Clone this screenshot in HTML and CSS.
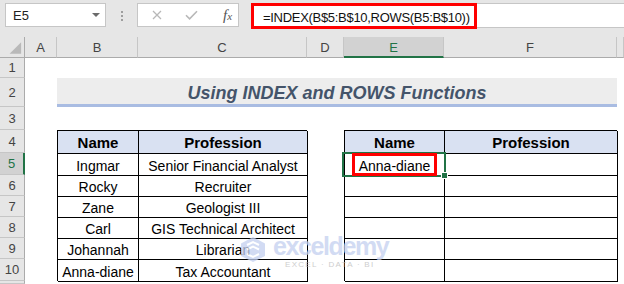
FILE: index.html
```html
<!DOCTYPE html>
<html lang="en">
<head>
<meta charset="UTF-8">
<meta name="viewport" content="width=device-width, initial-scale=1.0">
<title>Using INDEX and ROWS Functions</title>
<link rel="stylesheet" href="styles.css">
</head>
<body>
<div class="formula-row">
    <div class="name-box"><span>E5</span><span class="caret"></span></div>
    <div class="grip"><i></i><i></i><i></i></div>
    <div class="fx-buttons">
        <svg class="btn-cancel" width="10" height="10" viewBox="0 0 10 10"><path d="M1 1L9 9M9 1L1 9" stroke="#b8b8b8" stroke-width="1.3"/></svg>
        <svg class="btn-enter" width="13" height="10" viewBox="0 0 13 10"><path d="M1 5.2L4.6 8.8L12 1.2" fill="none" stroke="#b8b8b8" stroke-width="1.6"/></svg>
        <span class="fx">f<small>x</small></span>
    </div>
    <div class="formula-input"><span class="formula-text">=INDEX(B$5:B$10,ROWS(B5:B$10))</span></div>
</div>

<div class="sheet">
    <div class="col-head corner"><svg width="25" height="20" viewBox="0 0 25 20"><polygon points="22,5 22,17 10,17" fill="#b9b9b9"/></svg></div>
    <div class="col-head">A</div>
    <div class="col-head">B</div>
    <div class="col-head">C</div>
    <div class="col-head">D</div>
    <div class="col-head active">E</div>
    <div class="col-head">F</div>
    <div class="col-head"></div>

    <div class="row-head">1</div>
    <div class="row-head">2</div>
    <div class="row-head">3</div>
    <div class="row-head">4</div>
    <div class="row-head active">5</div>
    <div class="row-head">6</div>
    <div class="row-head">7</div>
    <div class="row-head">8</div>
    <div class="row-head">9</div>
    <div class="row-head">10</div>
    <div class="row-head"></div>

    <div class="title-band">Using INDEX and ROWS Functions</div>

    <div class="data-table table-left">
        <div class="cell head">Name</div><div class="cell head">Profession</div>
        <div class="cell">Ingmar</div><div class="cell">Senior Financial Analyst</div>
        <div class="cell">Rocky</div><div class="cell">Recruiter</div>
        <div class="cell">Zane</div><div class="cell">Geologist III</div>
        <div class="cell">Carl</div><div class="cell">GIS Technical Architect</div>
        <div class="cell">Johannah</div><div class="cell">Librarian</div>
        <div class="cell">Anna-diane</div><div class="cell">Tax Accountant</div>
    </div>

    <div class="data-table table-right">
        <div class="cell head">Name</div><div class="cell head">Profession</div>
        <div class="cell selected"><span class="result">Anna-diane</span></div><div class="cell"></div>
        <div class="cell"></div><div class="cell"></div>
        <div class="cell"></div><div class="cell"></div>
        <div class="cell"></div><div class="cell"></div>
        <div class="cell"></div><div class="cell"></div>
        <div class="cell"></div><div class="cell"></div>
    </div>
</div>

<div class="watermark">
    <svg width="26" height="27" viewBox="0 0 26 27">
        <polygon points="13,1 25,7.5 25,20 13,26 1,20 1,7.5" fill="#c3d0f0"/>
        <path d="M7 9L13 6L19 9M7 13.5L13 10.5L19 13.5M7 18L13 21L19 18" fill="none" stroke="#ffffff" stroke-width="2"/>
    </svg>
    <div class="wm-text">
        <div class="wm-name">exceldemy</div>
        <div class="wm-tag">EXCEL · DATA · BI</div>
    </div>
</div>
</body>
</html>
```

FILE: styles.css
```css
body {
    margin: 0;
    width: 624px;
    height: 284px;
    overflow: hidden;
    position: relative;
    background-color: #fff;
    font-family: 'Liberation Sans', Arial, sans-serif;
    color: #000;
}

/* formula bar */
.formula-row {
    display: flex;
    align-items: flex-start;
    height: 37px;
    padding-top: 3px;
    box-sizing: border-box;
    background-color: #e6e6e6;
}
.name-box {
    margin-left: 5px;
    width: 101px;
    height: 24px;
    box-sizing: border-box;
    background-color: #fff;
    border: 1px solid #c6c6c6;
    display: flex;
    align-items: center;
    justify-content: space-between;
    padding: 0 5px 0 7px;
    font-size: 13px;
    color: #222;
}
.caret {
    width: 0;
    height: 0;
    border-left: 4px solid transparent;
    border-right: 4px solid transparent;
    border-top: 4px solid #6b6b6b;
}
.grip {
    width: 31px;
    display: flex;
    flex-direction: column;
    align-items: center;
    gap: 2px;
    padding-top: 8px;
}
.grip i {
    width: 2px;
    height: 2px;
    background-color: #9e9e9e;
}
.fx-buttons {
    width: 102px;
    height: 24px;
    box-sizing: border-box;
    background-color: #fff;
    border: 1px solid #c6c6c6;
    display: flex;
    align-items: center;
}
.btn-cancel {
    margin-left: 14px;
}
.btn-enter {
    margin-left: 23px;
}
.fx {
    margin-left: 25px;
    font-family: 'Liberation Serif', serif;
    font-style: italic;
    font-size: 15px;
    color: #555;
}
.fx small {
    font-size: 11px;
}
.formula-input {
    margin-left: 12px;
    flex: 1;
    height: 25px;
    box-sizing: border-box;
    background-color: #fff;
    border-top: 1px solid #c6c6c6;
    border-bottom: 1px solid #c6c6c6;
}
.formula-text {
    display: block;
    width: 226px;
    height: 26px;
    margin-top: -1px;
    box-sizing: border-box;
    border: 3px solid #ff0000;
    padding: 3px 0 0 9px;
    font-size: 13px;
    line-height: 17px;
    letter-spacing: -0.3px;
    color: #111;
}

/* sheet grid */
.sheet {
    display: grid;
    grid-template-columns: 25px 32px 81px 169px 37px 100px 173px 1fr;
    grid-template-rows: 21px 20px 29px 23px 23px 22px 21px 21px 21px 21px 22px 1fr;
    height: 247px;
}
.col-head {
    grid-row: 1;
    background-color: #e6e6e6;
    border-right: 1px solid #c6c6c6;
    border-bottom: 1px solid #ababab;
    box-sizing: border-box;
    display: flex;
    align-items: center;
    justify-content: center;
    font-size: 13px;
    color: #444;
    padding-top: 1px;
}
.col-head.corner {
    border-right-color: #ababab;
    padding: 0;
    align-items: flex-start;
}
.col-head.active {
    background-color: #d2d2d2;
    color: #217346;
    border-bottom: 2px solid #217346;
}
.row-head {
    grid-column: 1;
    background-color: #e6e6e6;
    border-right: 1px solid #ababab;
    border-bottom: 1px solid #c6c6c6;
    box-sizing: border-box;
    display: flex;
    align-items: center;
    justify-content: center;
    font-size: 13px;
    color: #444;
}
.row-head.active {
    background-color: #d2d2d2;
    color: #217346;
    border-right: 2px solid #217346;
}

.title-band {
    grid-column: 3 / 8;
    grid-row: 3;
    background-color: #ededed;
    border-bottom: 3px solid #a9bce2;
    box-sizing: border-box;
    display: flex;
    align-items: center;
    justify-content: center;
    padding-top: 5px;
    font-size: 18px;
    font-weight: bold;
    font-style: italic;
    color: #44546a;
}

/* data tables */
.data-table {
    display: grid;
    grid-template-columns: 81px 169px;
    grid-template-rows: 23px 22px 21px 21px 21px 21px 22px;
    border-left: 1px solid #000;
    border-top: 1px solid #000;
}
.table-left {
    grid-column: 3 / 5;
    grid-row: 5 / 12;
}
.table-right {
    grid-column: 6 / 8;
    grid-row: 5 / 12;
    grid-template-columns: 100px 173px;
}
.cell {
    border-right: 1px solid #000;
    border-bottom: 1px solid #000;
    display: flex;
    align-items: center;
    justify-content: center;
    padding-top: 2px;
    font-size: 14px;
    white-space: nowrap;
}
.cell.head {
    background-color: #d9e1f2;
    padding-top: 0;
    font-size: 15px;
    font-weight: bold;
}
.cell.selected {
    position: relative;
    padding-top: 0;
    align-items: stretch;
}
.cell.selected::after {
    content: '';
    position: absolute;
    left: -3px;
    top: -2px;
    right: -2px;
    bottom: -2px;
    border: 2px solid #217346;
    z-index: 1;
}
.cell.selected::before {
    content: '';
    position: absolute;
    right: -4px;
    bottom: -4px;
    width: 5px;
    height: 5px;
    background-color: #217346;
    border: 1px solid #fff;
    z-index: 2;
}
.result {
    position: relative;
    z-index: 3;
    display: flex;
    align-items: center;
    margin-top: -1px;
    padding: 2px 4px 0;
    border: 3px solid #ff0000;
    box-sizing: border-box;
    height: 23px;
}

/* watermark */
.watermark {
    position: absolute;
    left: 240px;
    top: 236px;
    display: flex;
    align-items: flex-start;
    opacity: 0.75;
    pointer-events: none;
}
.wm-text {
    margin-left: 7px;
}
.wm-name {
    font-size: 25px;
    font-weight: bold;
    letter-spacing: -1.4px;
    line-height: 20px;
    color: #c3d0f0;
}
.wm-tag {
    margin-top: 4px;
    margin-left: 12px;
    font-size: 8px;
    letter-spacing: 1.3px;
    line-height: 9px;
    color: #bdbdbd;
}
```
